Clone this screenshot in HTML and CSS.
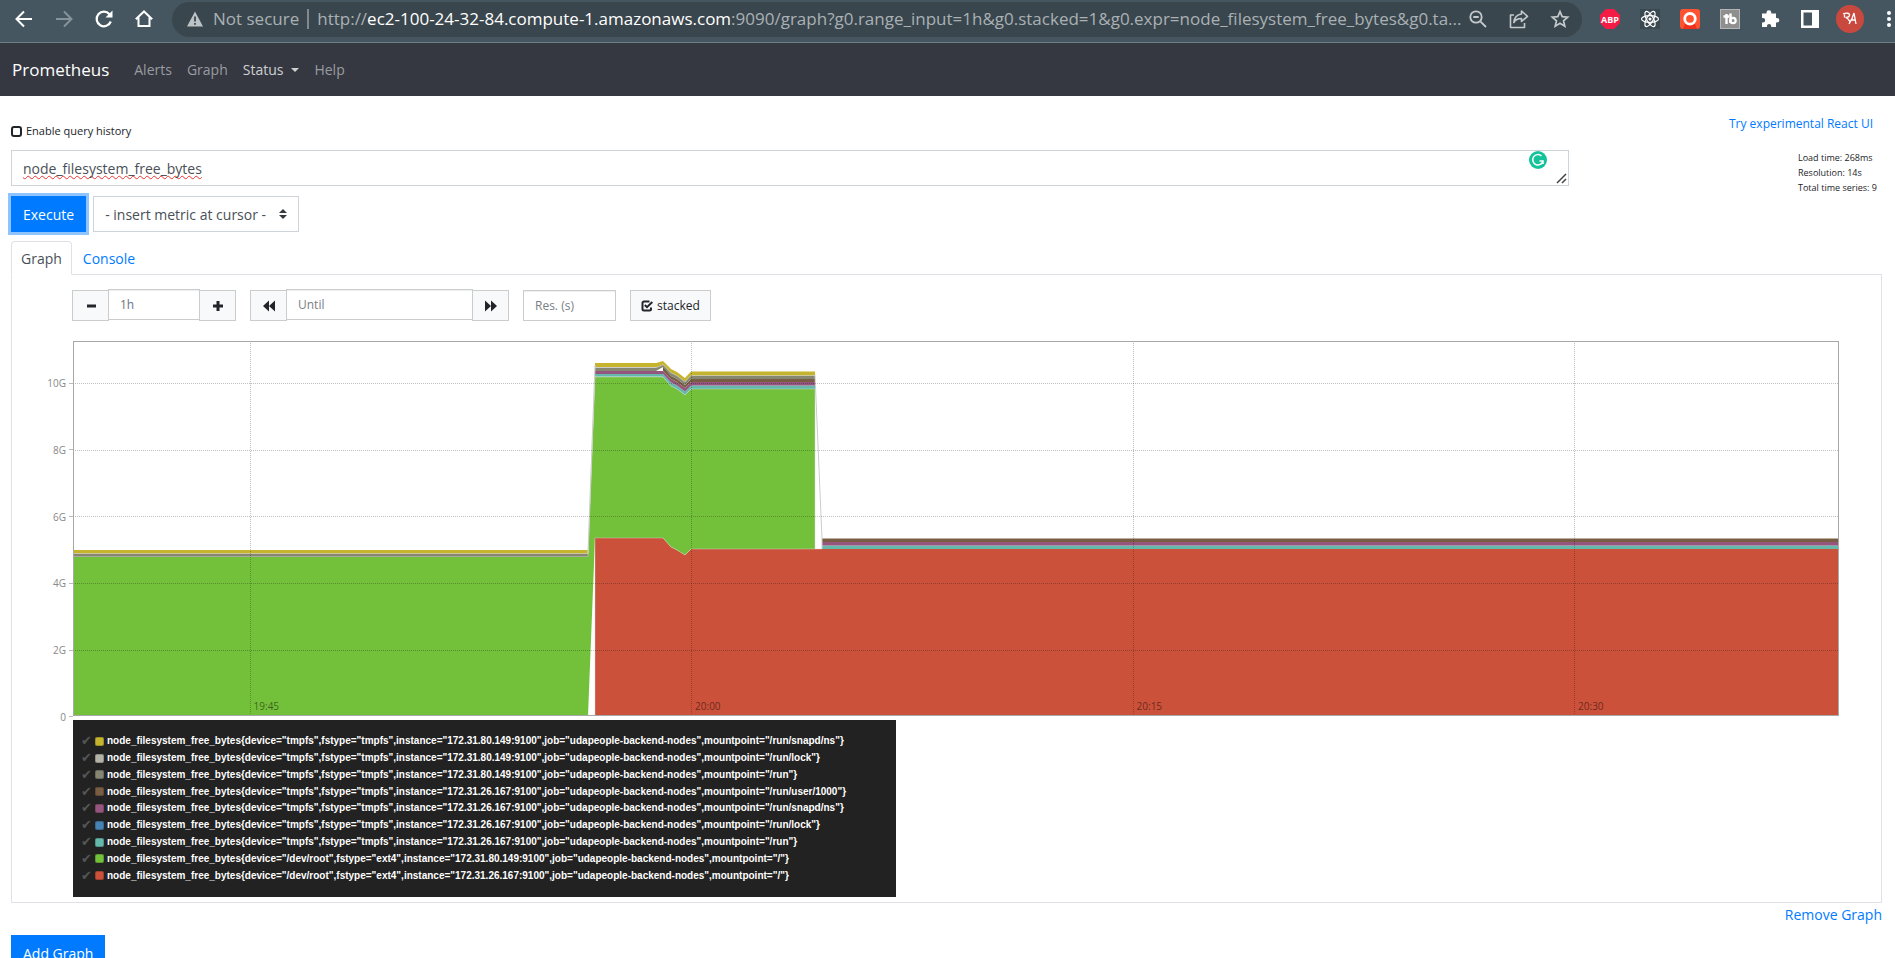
FILE: index.html
```
<!DOCTYPE html>
<html lang="en">
<head>
<meta charset="utf-8">
<title>Prometheus Time Series Collection and Processing Server</title>
<link rel="stylesheet" href="styles.css">
</head>
<body>
<header class="browser">
  <div class="browser-nav">
    <button class="tool" aria-label="Back"><svg width="20" height="20" viewBox="0 0 20 20" fill="none" stroke="#fff" stroke-width="2"><path d="M18 10H3M10 2.500L2.500 10l7.500 7.500"/></svg></button>
    <button class="tool" aria-label="Forward"><svg width="20" height="20" viewBox="0 0 20 20" fill="none" stroke="#87939a" stroke-width="2"><path d="M2 10h15M10 2.500L17.500 10 10 17.500"/></svg></button>
    <button class="tool" aria-label="Reload"><svg width="20" height="20" viewBox="0 0 20 20" fill="none" stroke="#fff" stroke-width="2.200"><path d="M16.800 12.500A7.300 7.300 0 1 1 15.500 5.200"/><path d="M18.500 1.500v7h-7z" fill="#fff" stroke="none"/></svg></button>
    <button class="tool" aria-label="Home"><svg width="20" height="20" viewBox="0 0 20 20" fill="none" stroke="#fff" stroke-width="2"><path d="M1.800 10.300L10 2.500l8.200 7.800M4.500 8.500V17h11V8.500"/></svg></button>
  </div>
  <div class="address">
    <svg width="16" height="16" viewBox="0 0 16 16"><path d="M8 .5L16 15.500H0z" fill="#bcc3c7"/><path d="M7.100 5.500h1.800v5H7.100zM7.100 12h1.800v1.800H7.100z" fill="#3a464d"/></svg>
    <span class="insecure">Not secure</span>
    <span class="url">http://<b>ec2-100-24-32-84.compute-1.amazonaws.com</b>:9090/graph?g0.range_input=1h&amp;g0.stacked=1&amp;g0.expr=node_filesystem_free_bytes&amp;g0.ta...</span>
    <div class="address-tools">
      <button class="tool" aria-label="Zoom"><svg width="20" height="20" viewBox="0 0 20 20" fill="none" stroke="#c3c9cc" stroke-width="1.800"><circle cx="8" cy="8" r="5.700"/><path d="M12.300 12.300l5.700 5.700M5.300 8h5.400"/></svg></button>
      <button class="tool" aria-label="Share"><svg width="20" height="20" viewBox="0 0 20 20" fill="none" stroke="#c3c9cc" stroke-width="1.600" stroke-linejoin="round"><path d="M5 6H1.500v12.500h14V14"/><path d="M12.500 2l6 5.300-6 5.200V9.500C9 9.500 6.500 10.500 4.800 13.500 5.300 9 8 5.500 12.500 5z"/></svg></button>
      <button class="tool" aria-label="Bookmark"><svg width="20" height="20" viewBox="0 0 20 20" fill="none" stroke="#c3c9cc" stroke-width="1.700"><path d="M10 2.600l2.200 5.100 5.500.5-4.200 3.600 1.300 5.400L10 14.300l-4.800 2.900 1.300-5.400L2.300 8.200l5.500-.5z"/></svg></button>
    </div>
  </div>
  <div class="extensions">
    <button class="tool" aria-label="Adblock Plus"><svg width="20" height="20" viewBox="0 0 20 20"><path d="M6 0h8l6 6v8l-6 6H6l-6-6V6z" fill="#f41b45"/><text x="10" y="13.500" class="abp">ABP</text></svg></button>
    <button class="tool" aria-label="React Developer Tools"><svg width="20" height="20" viewBox="0 0 20 20" fill="none" stroke="#fff" stroke-width="1.200"><path d="M0 0h20v20H0z" fill="#3a4850" stroke="none"/><ellipse cx="10" cy="10" rx="8.500" ry="3.300"/><ellipse cx="10" cy="10" rx="8.500" ry="3.300" transform="rotate(60 10 10)"/><ellipse cx="10" cy="10" rx="8.500" ry="3.300" transform="rotate(120 10 10)"/><circle cx="10" cy="10" r="1.500" fill="#fff" stroke="none"/></svg></button>
    <button class="tool" aria-label="Recorder"><svg width="20" height="20" viewBox="0 0 20 20"><rect width="20" height="20" rx="3" fill="#ff5230"/><path d="M5 15h10l2 5H3z" fill="#ef2f1c"/><circle cx="10" cy="9.800" r="5.300" fill="none" stroke="#fff" stroke-width="2.800"/></svg></button>
    <button class="tool" aria-label="TubeBuddy"><svg width="20" height="20" viewBox="0 0 20 20" fill="none" stroke="#fff"><rect x=".5" y=".5" width="19" height="19" fill="#8f8f8f" stroke="#b5b5b5"/><path d="M6.500 5v10M3.500 7.500h5.500M10.500 4.500V14" stroke-width="2.400"/><circle cx="13" cy="11.500" r="2.700" stroke-width="2.200"/></svg></button>
    <button class="tool" aria-label="Extensions"><svg width="20" height="20" viewBox="0 0 20 20"><path d="M2 4.500h4.500V3.600a2.400 2.400 0 0 1 4.800 0v.9H16V9h1a2.300 2.300 0 0 1 0 4.600h-1V18h-4.800v-1a2.100 2.100 0 0 0-4.200 0v1H2v-4.500h1a2.200 2.200 0 0 0 0-4.400H2z" fill="#fff"/></svg></button>
    <button class="tool" aria-label="Side panel"><svg width="20" height="20" viewBox="0 0 20 20"><path d="M1 1h18v18H1zM3.500 3.500v13H12v-13z" fill="#fff" fill-rule="evenodd"/></svg></button>
    <button class="tool avatar" aria-label="Profile"><svg width="28" height="28" viewBox="0 0 28 28"><circle cx="14" cy="14" r="14" fill="#c9493f"/><path d="M7 9c3-1.500 7-1 6.500 1.500-.4 1.700-2.500 2-4 1.800 2.500.5 3.500 3 5 5.200M8.500 9.500v3M13 19c2-3 4-7 5-11l2 11M15 15h4.500" fill="none" stroke="#fff" stroke-width="1.300"/></svg></button>
    <button class="tool kebab" aria-label="Menu"><svg width="6" height="18" viewBox="0 0 6 18" fill="#fff"><circle cx="3" cy="3" r="2"/><circle cx="3" cy="9" r="2"/><circle cx="3" cy="15" r="2"/></svg></button>
  </div>
</header>

<nav class="navbar">
  <a class="brand" href="#">Prometheus</a>
  <a href="#">Alerts</a>
  <a href="#">Graph</a>
  <a class="current" href="#">Status<span class="caret"></span></a>
  <a href="#">Help</a>
</nav>

<main class="page">
  <div class="top-row">
    <button class="history"><svg width="11" height="11" viewBox="0 0 11 11"><rect x="1" y="1" width="9" height="9" rx="2" fill="none" stroke="#212529" stroke-width="2"/></svg>Enable query history</button>
    <a class="react-link" href="#">Try experimental React UI</a>
  </div>

  <div class="query-row">
    <div class="expression">
      <textarea class="expr" aria-label="Expression" rows="1" spellcheck="false">node_filesystem_free_bytes</textarea>
      <svg class="grammar" width="18" height="18" viewBox="0 0 18 18"><circle cx="9" cy="9" r="9" fill="#15c39a"/><path d="M12.500 5A5.200 5.200 0 1 0 14 10h-3.500M14 9.500V13" fill="none" stroke="#fff" stroke-width="1.500"/></svg>
      <svg class="grip" width="11" height="11" viewBox="0 0 11 11"><path d="M1 10l9-9M6 10l4-4" stroke="#444" stroke-width="1.500"/></svg>
    </div>
    <div class="stats"><div>Load time: 268ms</div><div>Resolution: 14s</div><div>Total time series: 9</div></div>
  </div>

  <div class="run-row">
    <button class="primary execute">Execute</button>
    <div class="metric">
      <select aria-label="Metric"><option>- insert metric at cursor -</option></select>
      <svg width="8" height="10" viewBox="0 0 8 10"><path d="M4 0l4 4H0zM0 6h8l-4 4z" fill="#343a40"/></svg>
    </div>
  </div>

  <div class="tabs">
    <a class="tab active" href="#">Graph</a>
    <a class="tab" href="#">Console</a>
  </div>

  <section class="pane">
    <div class="controls">
      <div class="group">
        <button aria-label="Shrink range"><svg width="12" height="12" viewBox="0 0 12 12"><path d="M2 4.500h9v3H2z" fill="#212529"/></svg></button>
        <input class="range" aria-label="Range" value="1h">
        <button aria-label="Grow range"><svg width="12" height="12" viewBox="0 0 12 12"><path d="M4.500 1h3v3.500H11v3H7.500V11h-3V7.500H1v-3h3.500z" fill="#212529"/></svg></button>
      </div>
      <div class="group">
        <button aria-label="Rewind"><svg width="12" height="12" viewBox="0 0 12 12"><path d="M6 .5v11L0 6zM12 .5v11L6 6z" fill="#212529"/></svg></button>
        <input class="until" aria-label="Until" placeholder="Until">
        <button aria-label="Fast forward"><svg width="12" height="12" viewBox="0 0 12 12"><path d="M0 .5v11L6 6zM6 .5v11L12 6z" fill="#212529"/></svg></button>
      </div>
      <input class="res" aria-label="Resolution in seconds" placeholder="Res. (s)">
      <button class="stacked"><svg width="12" height="12" viewBox="0 0 12 12" fill="none" stroke="#212529" stroke-width="2"><path d="M8.500 1.500H3A1.500 1.500 0 0 0 1.500 3v6A1.500 1.500 0 0 0 3 10.500h5.500A1.500 1.500 0 0 0 10 9V7.500M3.800 5l2.200 2.200L11.300 2"/></svg>stacked</button>
    </div>

    <div class="chart-row">
      <div class="y-axis"><span>10G</span><span>8G</span><span>6G</span><span>4G</span><span>2G</span><span>0</span></div>
      <div class="chart">
        <svg class="plot" viewBox="0 0 1766 375" preserveAspectRatio="none">
          <path d="M522 197H590L598 206 604 209 612 214 618 208H1766V375H522z" fill="#cb513a"/>
          <path d="M0 216H515L522 36H590L598 45 604 48 612 54 618 48H742V208H618L612 214 604 209 598 206 590 197H522L515 375H0z" fill="#73c03a"/>
          <path d="M522 36H590L598 45 604 48 612 54 618 48H742V44.500H618L612 50.500 604 44.500 598 41.500 590 33H522zM749 208H1766V204.500H749z" fill="#65b9ac"/>
          <path d="M522 33H590L598 41.500 604 44.500 612 50.500 618 44.500H742V41H618L612 47 604 41 598 38 590 30H522zM749 204.500H1766V201H749z" fill="#96557e"/>
          <path d="M590 28V30L598 38 604 41 612 47 618 41H742V38H618L612 44 604 38 598 35 590 25.500zM749 201H1766V197.500H749z" fill="#785d43"/>
          <path d="M0 216H515V212.500H0zM522 30H583L590 26 598 35 604 38 612 44 618 38H742V34.500H618L612 40.500 604 34.500 598 31.500 590 23.500 583 26.500H522z" fill="#858772"/>
          <path d="M0 212.500H515V209H0zM522 26H584L590 23.500 598 31.500 604 34.500 612 40.500 618 34.500H742V30.500H618L612 37 604 31 598 28 590 20 583 22H522z" fill="#c6b42f"/>
          <path class="edge" d="M0 212.500H515L522 26.500H584L590 24 598 32 604 35 612 41 618 34.500H742M0 215.500H515L522 35.500H590"/>
          <path class="edge" d="M522 197H590L598 206 604 209 612 214 618 208H749M522 197V375M522 36H590L598 45 604 48 612 54 618 48H742V208"/>
          <path class="drop" d="M515 212L522 24M742 34L749 197.500V208"/>
          <path class="grid-line" d="M0 42.500H1766M0 109.500H1766M0 175.500H1766M0 242.500H1766M0 309.500H1766M177.500 0V375M618.500 0V375M1060.500 0V375M1501.500 0V375"/>
        </svg>
        <div class="x-axis"><span>19:45</span><span>20:00</span><span>20:15</span><span>20:30</span></div>
      </div>
    </div>

    <ul class="legend">
      <li><i>✔</i><em class="c1"></em>node_filesystem_free_bytes{device="tmpfs",fstype="tmpfs",instance="172.31.80.149:9100",job="udapeople-backend-nodes",mountpoint="/run/snapd/ns"}</li>
      <li><i>✔</i><em class="c2"></em>node_filesystem_free_bytes{device="tmpfs",fstype="tmpfs",instance="172.31.80.149:9100",job="udapeople-backend-nodes",mountpoint="/run/lock"}</li>
      <li><i>✔</i><em class="c3"></em>node_filesystem_free_bytes{device="tmpfs",fstype="tmpfs",instance="172.31.80.149:9100",job="udapeople-backend-nodes",mountpoint="/run"}</li>
      <li><i>✔</i><em class="c4"></em>node_filesystem_free_bytes{device="tmpfs",fstype="tmpfs",instance="172.31.26.167:9100",job="udapeople-backend-nodes",mountpoint="/run/user/1000"}</li>
      <li><i>✔</i><em class="c5"></em>node_filesystem_free_bytes{device="tmpfs",fstype="tmpfs",instance="172.31.26.167:9100",job="udapeople-backend-nodes",mountpoint="/run/snapd/ns"}</li>
      <li><i>✔</i><em class="c6"></em>node_filesystem_free_bytes{device="tmpfs",fstype="tmpfs",instance="172.31.26.167:9100",job="udapeople-backend-nodes",mountpoint="/run/lock"}</li>
      <li><i>✔</i><em class="c7"></em>node_filesystem_free_bytes{device="tmpfs",fstype="tmpfs",instance="172.31.26.167:9100",job="udapeople-backend-nodes",mountpoint="/run"}</li>
      <li><i>✔</i><em class="c8"></em>node_filesystem_free_bytes{device="/dev/root",fstype="ext4",instance="172.31.80.149:9100",job="udapeople-backend-nodes",mountpoint="/"}</li>
      <li><i>✔</i><em class="c9"></em>node_filesystem_free_bytes{device="/dev/root",fstype="ext4",instance="172.31.26.167:9100",job="udapeople-backend-nodes",mountpoint="/"}</li>
    </ul>
  </section>

  <div class="remove"><a href="#">Remove Graph</a></div>
  <button class="primary">Add Graph</button>
</main>
</body>
</html>
```
FILE: styles.css
```
* { box-sizing: border-box; }
body {
  margin: 0;
  height: 100vh;
  overflow: hidden;
  background: #fff;
  color: #212529;
  font: 14px/22px "Open Sans", "Noto Sans", sans-serif;
}
button, input, select, textarea { font: inherit; color: inherit; margin: 0; border-radius: 0; }
a { color: #007bff; text-decoration: none; }
svg { display: block; flex: none; }

/* Browser toolbar */
.browser {
  display: flex;
  align-items: center;
  height: 43px;
  padding: 0 3px 4px 14px;
  background: #455660;
  border-bottom: 1px solid #6d8184;
}
.tool { display: block; padding: 0; border: 0; background: none; }
.browser-nav { display: flex; gap: 20px; margin-right: 18px; }
.address {
  display: flex;
  flex: 1;
  align-items: center;
  min-width: 0;
  height: 35px;
  padding: 0 12px 0 15px;
  border-radius: 18px;
  background: #3a464d;
  color: #a9b1b5;
  font-size: 17px;
  white-space: nowrap;
}
.insecure { margin: 0 8px 0 10px; padding-right: 8px; border-right: 2px solid #7f8a90; line-height: 20px; }
.url { flex: 1; }
.url b { color: #fff; font-weight: 400; }
.address-tools { display: flex; gap: 21px; }
.extensions { display: flex; align-items: center; gap: 20px; margin-left: 18px; }
.avatar { margin: 0 -4px; }
.kebab { margin-left: 6px; }
.abp { fill: #fff; font: 700 9px "Open Sans", sans-serif; text-anchor: middle; }

/* Site navigation */
.navbar { display: flex; align-items: center; gap: 15px; height: 53px; padding: 0 12px; background: #353841; }
.navbar a { color: #999ca0; }
.navbar .brand { margin-right: 10px; color: #fff; font-size: 17px; }
.navbar .current { display: flex; align-items: center; gap: 8px; color: #ced0d2; }
.caret { border: 4px solid transparent; border-top-color: currentColor; border-bottom: 0; }

/* Query form */
.page { padding: 16px 13px 0 11px; }
.top-row { display: flex; justify-content: space-between; height: 38px; font-size: 12px; line-height: 24px; }
.history { display: flex; align-items: center; gap: 4px; height: 38px; padding: 0; border: 0; background: none; font-size: 11px; }
.react-link { margin-right: 9px; }
.query-row { display: flex; gap: 229px; margin-bottom: 10px; height: 36px; }
.expression { position: relative; flex: 1; }
.expr {
  display: block;
  width: 100%;
  height: 36px;
  padding: 7px 11px 5px;
  border: 1px solid #ced4da;
  color: #495057;
  overflow: hidden;
  resize: none;
  text-decoration: underline wavy #e33 1px;
  text-decoration-skip-ink: none;
  text-underline-offset: 1px;
}
.grammar { position: absolute; top: 1px; right: 22px; }
.grip { position: absolute; right: 2px; bottom: 2px; }
.stats { width: 84px; font-size: 9px; line-height: 15px; white-space: nowrap; }
.run-row { display: flex; gap: 7px; margin-bottom: 9px; }
.primary { height: 36px; padding: 2px 12px 0; border: 0; background: #007bff; color: #fff; }
.execute { box-shadow: 0 0 0 3px #8fc4ff; }
.metric { position: relative; }
.metric select {
  height: 36px;
  width: 206px;
  padding: 2px 11px 0;
  border: 1px solid #ced4da;
  background: #fff;
  color: #495057;
  appearance: none;
}
.metric svg { position: absolute; right: 12px; top: 13px; }

/* Tabs and graph pane */
.tabs { display: flex; height: 33px; }
.tab { padding: 7px 11px; }
.tab.active {
  z-index: 1;
  height: 34px;
  padding: 6px 9px;
  border: 1px solid #dee2e6;
  border-bottom-color: #fff;
  border-radius: 4px 4px 0 0;
  background: #fff;
  color: #495057;
}
.pane { padding: 15px 42px 5px 17px; border: 1px solid #dee2e6; }
.controls { display: flex; gap: 14px; padding-left: 43px; margin-bottom: 20px; }
.group { display: flex; }
.controls button, .controls input { height: 31px; border: 1px solid #ccc; font-size: 12px; }
.controls button { display: flex; align-items: center; justify-content: center; gap: 4px; min-width: 37px; padding: 0 10px; background: #f8f9fa; }
.controls input { padding: 0 11px; color: #6c757d; background: #fff; box-shadow: inset 0 1px 1px #eee; }
.controls input::placeholder { color: #7a8086; }
.group input { margin: -1px -1px 1px; }
.range { width: 92px; }
.until { width: 187px; }
.res { width: 93px; }
.chart-row { display: flex; align-items: flex-start; }
.y-axis {
  display: flex;
  flex-direction: column;
  justify-content: space-between;
  width: 44px;
  height: 350px;
  margin: 34px 0 -10px;
  align-items: flex-end;
  color: #888;
  font-size: 10px;
  line-height: 16px;
}
.y-axis span { display: flex; align-items: center; gap: 3px; }
.y-axis span::after { content: ""; width: 4px; height: 1px; background: #bbb; }
.chart { position: relative; flex: 1; min-width: 0; height: 375px; outline: 1px solid #a8a8a8; outline-offset: -1px; }
.plot { width: 100%; height: 100%; }
.edge { fill: none; stroke: #ddd; stroke-opacity: .4; vector-effect: non-scaling-stroke; }
.drop { fill: none; stroke: #ccc; vector-effect: non-scaling-stroke; }
.grid-line { fill: none; stroke: #000; stroke-opacity: .25; stroke-dasharray: 1 1; vector-effect: non-scaling-stroke; }
.x-axis {
  position: absolute;
  inset: auto 0 2px 10%;
  display: grid;
  grid-template-columns: 25fr 25fr 25fr 15fr;
  color: rgba(0, 0, 0, .5);
  font-size: 10px;
  line-height: 16px;
}
.x-axis span { padding-left: 4px; }
.legend {
  display: grid;
  grid-auto-rows: 1fr;
  align-items: center;
  width: max-content;
  min-width: 823px;
  min-height: 177px;
  margin: 4px 0 0 44px;
  padding: 13px 21px 13px 8px;
  list-style: none;
  background: #222;
  color: #fff;
  font: 700 10px/16px "Liberation Sans", Arial, sans-serif;
}
.legend li { display: flex; align-items: center; }
.legend i { width: 14px; color: #555; font: 13px/16px "DejaVu Sans", sans-serif; }
.legend em { width: 9px; height: 9px; margin-right: 3px; border: 1px solid rgba(0, 0, 0, .2); border-radius: 2px; }
.c1 { background: #c6b42f; }
.c2 { background: #b3b3a6; }
.c3 { background: #858772; }
.c4 { background: #785d43; }
.c5 { background: #96557e; }
.c6 { background: #4682b4; }
.c7 { background: #65b9ac; }
.c8 { background: #73c03a; }
.c9 { background: #cb513a; }
.remove { padding: 1px 0 9px; text-align: right; }
```
